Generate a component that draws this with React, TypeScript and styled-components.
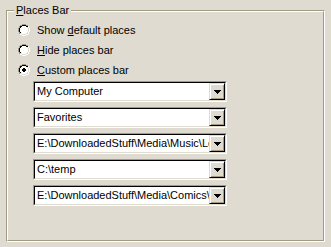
import React from 'react';
import styled, { createGlobalStyle } from 'styled-components';

const FACE = '#dfdbd0';
const SHADOW = '#a39a83';
const DARK = '#000000';
const LIGHT = '#ffffff';

const GlobalStyle = createGlobalStyle`
  html, body {
    margin: 0;
    padding: 0;
    background: ${FACE};
  }
  body {
    font-family: 'Liberation Sans', Arial, sans-serif;
    font-size: 11px;
    color: #000;
  }
`;

const Page = styled.div`
  width: 331px;
  height: 247px;
  box-sizing: border-box;
  padding: 10px 6px 5px 6px;
`;

const GroupOuter = styled.div`
  height: 100%;
  box-sizing: border-box;
  border: 1px solid;
  border-color: ${SHADOW} ${LIGHT} ${LIGHT} ${SHADOW};
`;

const GroupInner = styled.div`
  position: relative;
  height: 100%;
  box-sizing: border-box;
  border: 1px solid;
  border-color: ${LIGHT} ${SHADOW} ${SHADOW} ${LIGHT};
  padding: 8px 0 0 10px;
`;

const Legend = styled.div`
  position: absolute;
  top: -8px;
  left: 6px;
  padding: 0 2px;
  line-height: 13px;
  background: ${FACE};
`;

const Key = styled.span`
  text-decoration: underline;
`;

const RadioList = styled.div`
  display: flex;
  flex-direction: column;
`;

const RadioRow = styled.label`
  display: flex;
  align-items: center;
  height: 20px;
  gap: 7px;
`;

const ComboList = styled.div`
  display: flex;
  flex-direction: column;
  gap: 5px;
  margin: 1px 0 0 15px;
`;

const ComboOuter = styled.div`
  width: 194px;
  box-sizing: border-box;
  border: 1px solid;
  border-color: ${SHADOW} ${LIGHT} ${LIGHT} ${SHADOW};
`;

const ComboInner = styled.div`
  display: flex;
  height: 17px;
  border: 1px solid;
  border-color: ${DARK} ${FACE} ${FACE} ${DARK};
  background: #fff;
`;

const ComboText = styled.div`
  flex: 1;
  min-width: 0;
  overflow: hidden;
  white-space: nowrap;
  padding-left: 2px;
  line-height: 17px;
`;

const DropButton = styled.div`
  width: 16px;
  height: 17px;
  box-sizing: border-box;
  border: 1px solid;
  border-color: ${FACE} ${DARK} ${DARK} ${FACE};
  box-shadow: inset 1px 1px 0 ${LIGHT}, inset -1px -1px 0 ${SHADOW};
  background: ${FACE};
  display: flex;
  align-items: center;
  justify-content: center;
`;

// classic 12x12 radio bitmap
const RADIO_MAP = [
  '....SSSS....',
  '..SSKKKKSS..',
  '.SKKWWWWKKH.',
  '.SKWWWWWWFH.',
  'SKWWWWWWWWFH',
  'SKWWWWWWWWFH',
  'SKWWWWWWWWFH',
  'SKWWWWWWWWFH',
  '.SKWWWWWWFH.',
  '.SFFWWWWFFH.',
  '..HHFFFFHH..',
  '....HHHH....',
];

const DOT = ['.....DD.....', '....DDDD....', '....DDDD....', '.....DD.....'];

const COLORS: Record<string, string> = {
  S: SHADOW,
  K: DARK,
  W: '#fff',
  F: FACE,
  H: LIGHT,
  D: '#000',
};

function Radio({ checked }: { checked?: boolean }) {
  const rects: React.ReactNode[] = [];
  RADIO_MAP.forEach((row, y) => {
    row.split('').forEach((c, x) => {
      if (c !== '.') rects.push(<rect key={`${x}-${y}`} x={x} y={y} width={1} height={1} fill={COLORS[c]} />);
    });
  });
  if (checked) {
    DOT.forEach((row, i) => {
      row.split('').forEach((c, x) => {
        if (c === 'D') rects.push(<rect key={`d${x}-${i}`} x={x} y={i + 4} width={1} height={1} fill="#000" />);
      });
    });
  }
  return (
    <svg width="12" height="12" viewBox="0 0 12 12" shapeRendering="crispEdges">
      {rects}
    </svg>
  );
}

function Arrow() {
  return (
    <svg width="7" height="4" viewBox="0 0 7 4" shapeRendering="crispEdges">
      <rect x="0" y="0" width="7" height="1" fill="#000" />
      <rect x="1" y="1" width="5" height="1" fill="#000" />
      <rect x="2" y="2" width="3" height="1" fill="#000" />
      <rect x="3" y="3" width="1" height="1" fill="#000" />
    </svg>
  );
}

function Combo({ value }: { value: string }) {
  return (
    <ComboOuter>
      <ComboInner>
        <ComboText>{value}</ComboText>
        <DropButton>
          <Arrow />
        </DropButton>
      </ComboInner>
    </ComboOuter>
  );
}

const places = [
  'My Computer',
  'Favorites',
  'E:\\DownloadedStuff\\Media\\Music\\Lossless',
  'C:\\temp',
  'E:\\DownloadedStuff\\Media\\Comics\\Manga',
];

export default function App() {
  return (
    <>
      <GlobalStyle />
      <Page>
        <GroupOuter>
          <GroupInner>
            <Legend>
              <Key>P</Key>laces Bar
            </Legend>
            <RadioList>
              <RadioRow>
                <Radio />
                <span>
                  Show <Key>d</Key>efault places
                </span>
              </RadioRow>
              <RadioRow>
                <Radio />
                <span>
                  <Key>H</Key>ide places bar
                </span>
              </RadioRow>
              <RadioRow>
                <Radio checked />
                <span>
                  <Key>C</Key>ustom places bar
                </span>
              </RadioRow>
            </RadioList>
            <ComboList>
              {places.map((p) => (
                <Combo key={p} value={p} />
              ))}
            </ComboList>
          </GroupInner>
        </GroupOuter>
      </Page>
    </>
  );
}
